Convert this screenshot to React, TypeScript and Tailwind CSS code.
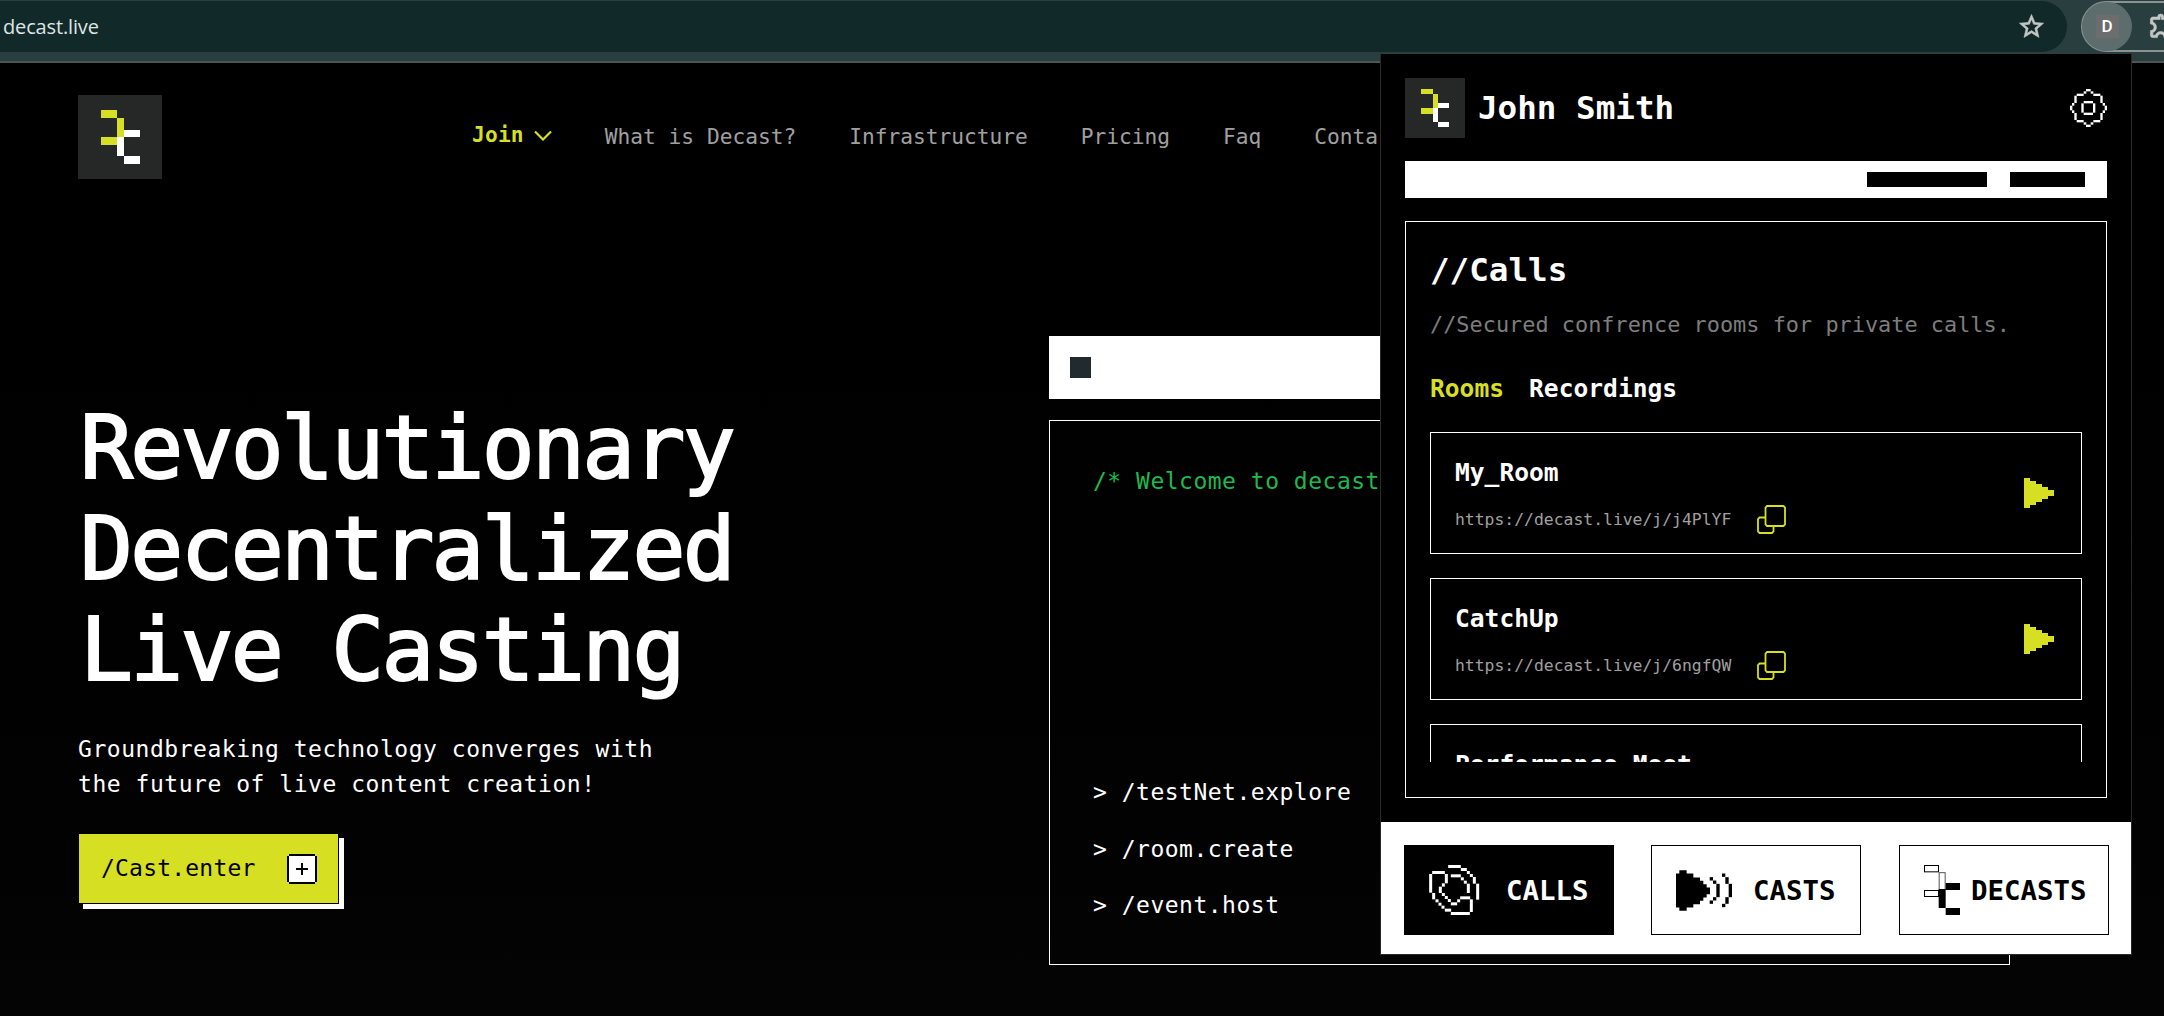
import React from "react";
import { MdOutlineExtension, MdStarBorder } from "react-icons/md";

type Rect = [number, number, number, number];

function Pixels({ rects, className }: { rects: Rect[]; className?: string }) {
  return (
    <g className={className}>
      {rects.map(([x, y, w, h]) => (
        <rect key={`${x}-${y}-${w}`} x={x} y={y} width={w} height={h} />
      ))}
    </g>
  );
}

function Logo({ className }: { className: string }) {
  return (
    <svg viewBox="0 0 84 84" className={className} shapeRendering="crispEdges">
      <rect width="84" height="84" fill="#262828" />
      <Pixels className="fill-[#d6df22]" rects={[[23, 15, 15.5, 8], [38.5, 23, 7.5, 19], [23, 42, 15.5, 8]]} />
      <Pixels className="fill-white" rects={[[46, 34.5, 15.5, 7.5], [39, 42, 7, 19], [46, 61, 15.5, 8]]} />
    </svg>
  );
}

const gearRects: Rect[] = [
  [48, 0, 14, 7], [41, 7, 8, 7], [62, 7, 8, 7], [20, 14, 21, 7], [70, 14, 21, 7],
  [13, 20, 7, 22], [91, 20, 7, 22], [6, 42, 7, 8], [98, 42, 7, 8], [0, 50, 7, 14], [104, 50, 7, 14],
  [6, 64, 7, 8], [98, 64, 7, 8], [13, 72, 7, 21], [91, 72, 7, 21], [20, 93, 21, 7], [70, 93, 21, 7],
  [41, 100, 8, 7], [62, 100, 8, 7], [48, 107, 14, 7],
  [41, 36, 28, 7], [34, 43, 7, 28], [69, 43, 7, 28], [41, 71, 28, 7],
];

const phoneRects: Rect[] = [
  [57, 0, 38, 9], [95, 9, 18, 9], [113, 18, 9, 9], [122, 27, 9, 9], [131, 36, 9, 20], [141, 56, 9, 48],
  [65, 28, 30, 9], [95, 37, 9, 9], [104, 47, 9, 9], [113, 56, 9, 28],
  [9, 18, 38, 9], [0, 27, 9, 56], [47, 27, 9, 28], [38, 55, 9, 10], [29, 65, 9, 19], [38, 84, 9, 9],
  [47, 93, 9, 9], [56, 102, 9, 9], [65, 112, 19, 9], [84, 103, 9, 9], [93, 94, 30, 9], [122, 103, 9, 38],
  [65, 141, 57, 9], [47, 131, 19, 9], [37, 122, 9, 9], [28, 113, 9, 9], [19, 103, 9, 9], [9, 84, 9, 19],
];

const castRects: Rect[] = [
  [101, 21, 10, 10], [111, 31, 10, 10], [121, 41, 10, 40], [111, 81, 10, 10], [101, 91, 10, 10],
  [138, 10, 10, 10], [148, 21, 10, 20], [158, 41, 10, 40], [148, 81, 10, 20], [138, 101, 10, 10],
];

function CopyIcon() {
  return (
    <svg viewBox="0 0 29 29" className="h-[29px] w-[29px]" fill="none" stroke="#d6df22" strokeWidth="1.8">
      <path d="M10 1h16.500l1.500 1.500v17l-1.500 1.500h-16.500l-1.500-1.500v-17z" />
      <path d="M8.500 12.500h-6l-1.500 1.500v12.500l1.500 1.500h12.500l1.500-1.500v-5.500" />
    </svg>
  );
}

function Play() {
  return (
    <svg viewBox="0 0 30 30" className="h-[30px] w-[30px] fill-[#d6df22]" shapeRendering="crispEdges">
      <path d="M0 0h6v3h6v3h6v3h6v3h6v6h-6v3h-6v3h-6v3h-6v3h-6z" />
    </svg>
  );
}

function RoomCard({ name, url }: { name: string; url?: string }) {
  return (
    <div className="flex h-[122px] shrink-0 items-start justify-between border border-white pt-6 pr-[27px] pl-6">
      <div className="flex flex-col">
        <div className="h-8 text-[24.6px] leading-8 font-bold whitespace-pre text-white">{name}</div>
        {url && (
          <div className="mt-4 flex h-[29px] items-center gap-[26px]">
            <span className="text-[16.4px] leading-[29px] text-[#a0a0a0]">{url}</span>
            <CopyIcon />
          </div>
        )}
      </div>
      <div className="mt-[21px]">
        <Play />
      </div>
    </div>
  );
}

function BrowserBar() {
  return (
    <div className="flex h-[63px] items-start overflow-hidden border-b-2 border-[#4a5655] bg-[#293f3f] pt-px">
      <div className="flex h-[51px] w-[2067px] shrink-0 items-center justify-between rounded-r-full bg-[#112929] pr-[21px] pl-[3px]">
        <span className="font-['Open_Sans'] text-[20px] leading-[51px] tracking-[-0.15px] text-[#dfe5e5]">decast.live</span>
        <MdStarBorder className="h-[29px] w-[29px] text-[#c4c7c7] [&>path:last-child]:stroke-[0.5]" />
      </div>
      <div className="ml-[14px] flex h-[51px] w-[160px] shrink-0 items-center rounded-l-full border-2 border-[#8b9291]">
        <div className="-ml-px flex h-[49px] w-[50px] shrink-0 items-center justify-center rounded-full bg-[#5d6d6d]">
          <span className="flex h-[23px] w-[23px] items-center justify-center bg-[#6b6e6c] font-['Roboto'] text-[17px] font-medium text-white">D</span>
        </div>
        <MdOutlineExtension className="mt-[-3px] ml-[16px] h-[29px] w-[29px] shrink-0 text-[#c4c7c7] [&>path:last-child]:stroke-[0.5]" />
      </div>
    </div>
  );
}

function Terminal() {
  return (
    <div className="mt-[157px] flex w-[961px] shrink-0 flex-col">
      <div className="flex h-[63px] items-center bg-white pl-[21px]">
        <div className="h-[21px] w-[21px] bg-[#202a2f]" />
      </div>
      <div className="mt-[21px] flex h-[545px] flex-col justify-between border border-white pt-[43px] pb-[41px] pl-[43px] text-[23px] leading-[35px] tracking-[0.5px]">
        <p className="whitespace-nowrap text-[#1fb94c]">/* Welcome to decast</p>
        <ul className="flex flex-col gap-[21.300px] text-white">
          <li>&gt; /testNet.explore</li>
          <li>&gt; /room.create</li>
          <li>&gt; /event.host</li>
        </ul>
      </div>
    </div>
  );
}

function Landing() {
  return (
    <div className="flex h-[953px] flex-col bg-linear-to-b from-black to-[#040404] pt-8 pl-[78px]">
      <header className="flex h-[84px] items-center text-[21.2px] leading-8 whitespace-nowrap text-[#a0a0a0]">
        <Logo className="h-[84px] w-[84px]" />
        <div className="ml-[310px] flex items-center gap-[10px] pb-1 font-bold text-[#d6df22]">
          <span className="tracking-[0.2px]">Join</span>
          <svg viewBox="0 0 18 11" className="h-[11px] w-[18px]" fill="none" stroke="#d6df22" strokeWidth="2.200">
            <path d="M1 1.500l8 8 8-8" />
          </svg>
        </div>
        <nav className="ml-[53px] flex gap-[53px]">
          <span>What is Decast?</span>
          <span>Infrastructure</span>
          <span>Pricing</span>
          <span>Faq</span>
          <span>Conta</span>
        </nav>
      </header>
      <div className="flex items-start">
        <section className="flex w-[971px] shrink-0 flex-col pt-[218px]">
          <h1 className="ml-[2px] text-[88px] leading-[101px] tracking-[-2.750px] text-white [-webkit-text-stroke:2px_white]">
            Revolutionary
            <br />
            Decentralized
            <br />
            Live Casting
          </h1>
          <p className="mt-8 text-[23px] leading-[35px] tracking-[0.53px] text-white">
            Groundbreaking technology converges with
            <br />
            the future of live content creation!
          </p>
          <button className="mt-[31px] flex h-[71px] w-[261px] items-center justify-between border border-black bg-[#d6df22] pr-[21px] pl-[22px] text-[23px] text-black shadow-[5px_5px_0_0_white]">
            <span className="tracking-[0.2px]">/Cast.enter</span>
            <svg viewBox="0 0 30 30" className="h-[30px] w-[30px]">
              <path d="M2 0h26v2h2v26h-2v2h-26v-2h-2v-26h2z" />
              <rect x="2" y="2" width="26" height="26" fill="white" />
              <path d="M15 9v12M9 15h12" stroke="black" strokeWidth="2" />
            </svg>
          </button>
        </section>
        <Terminal />
      </div>
    </div>
  );
}

function Popup() {
  return (
    <aside className="absolute top-[54px] left-[1380px] flex h-[901px] w-[752px] flex-col border border-t-0 border-[#2a2a2a] bg-black">
      <div className="flex flex-col px-6 pt-6">
        <div className="flex h-[60px] items-center">
          <Logo className="h-[60px] w-[60px]" />
          <span className="ml-[13px] text-[32.600px] leading-[60px] font-bold text-white">John Smith</span>
          <svg viewBox="0 0 111 114" className="ml-auto h-[38px] w-[37px] fill-white">
            <Pixels rects={gearRects} />
          </svg>
        </div>
        <div className="mt-[23px] flex h-[37px] items-center justify-end gap-[23px] bg-white pr-[22px]">
          <div className="h-[15px] w-[120px] bg-black" />
          <div className="h-[15px] w-[75px] bg-black" />
        </div>
        <div className="mt-[23px] flex h-[577px] flex-col border border-white px-6 pt-[23px]">
          <h2 className="text-[32.600px] leading-[50px] font-bold text-white">//Calls</h2>
          <p className="mt-[10px] text-[21.900px] leading-[40px] whitespace-nowrap text-[#7d7d7d]">
            //Secured confrence rooms for private calls.
          </p>
          <div className="mt-6 flex gap-[25px] text-[24.6px] leading-[40px] font-bold text-white">
            <span className="text-[#d6df22]">Rooms</span>
            <span>Recordings</span>
          </div>
          <div className="mt-[23px] flex h-[330px] flex-col gap-6 overflow-hidden">
            <RoomCard name="My_Room" url="https://decast.live/j/j4PlYF" />
            <RoomCard name="CatchUp" url="https://decast.live/j/6ngfQW" />
            <RoomCard name="Performance Meet" />
          </div>
        </div>
      </div>
      <div className="mt-auto flex h-[132px] items-start gap-[37px] bg-white pt-[23px] pl-[23px] text-[27.400px] font-bold text-black">
        <button className="flex h-[90px] w-[210px] items-center bg-black pl-[25px] text-white">
          <svg viewBox="0 0 152 150" className="h-[50px] w-[51px] fill-white">
            <Pixels rects={phoneRects} />
          </svg>
          <span className="mt-px ml-[26px]">CALLS</span>
        </button>
        <button className="flex h-[90px] w-[210px] items-center border border-black pl-6">
          <svg viewBox="0 0 168 122" className="h-[41px] w-[56px] fill-black">
            <path d="M0 10h10v-10h22v10h20v12h20v10h10v10h10v10h10v20h-10v10h-10v10h-10v10h-20v10h-20v10h-22v-10h-10z" />
            <Pixels rects={castRects} />
          </svg>
          <span className="mt-px ml-[21px]">CASTS</span>
        </button>
        <button className="ml-px flex h-[90px] w-[210px] items-center border border-black pl-6">
          <svg viewBox="0 0 108 150" className="h-[50px] w-[36px]">
            <g className="fill-white stroke-black" strokeWidth="3">
              <rect x="1.500" y="1.500" width="42" height="19" />
              <rect x="45.500" y="23" width="18" height="51" stroke="#555" />
              <rect x="1.500" y="76.500" width="42" height="18" />
            </g>
            <Pixels rects={[[65, 54, 43, 21], [44, 72, 21, 57], [65, 129, 43, 21]]} />
          </svg>
          <span className="mt-px ml-[11px]">DECASTS</span>
        </button>
      </div>
    </aside>
  );
}

export default function App() {
  return (
    <div className="relative h-[1016px] w-[2164px] overflow-hidden bg-black font-['DejaVu_Sans_Mono',monospace]">
      <BrowserBar />
      <Landing />
      <Popup />
    </div>
  );
}
